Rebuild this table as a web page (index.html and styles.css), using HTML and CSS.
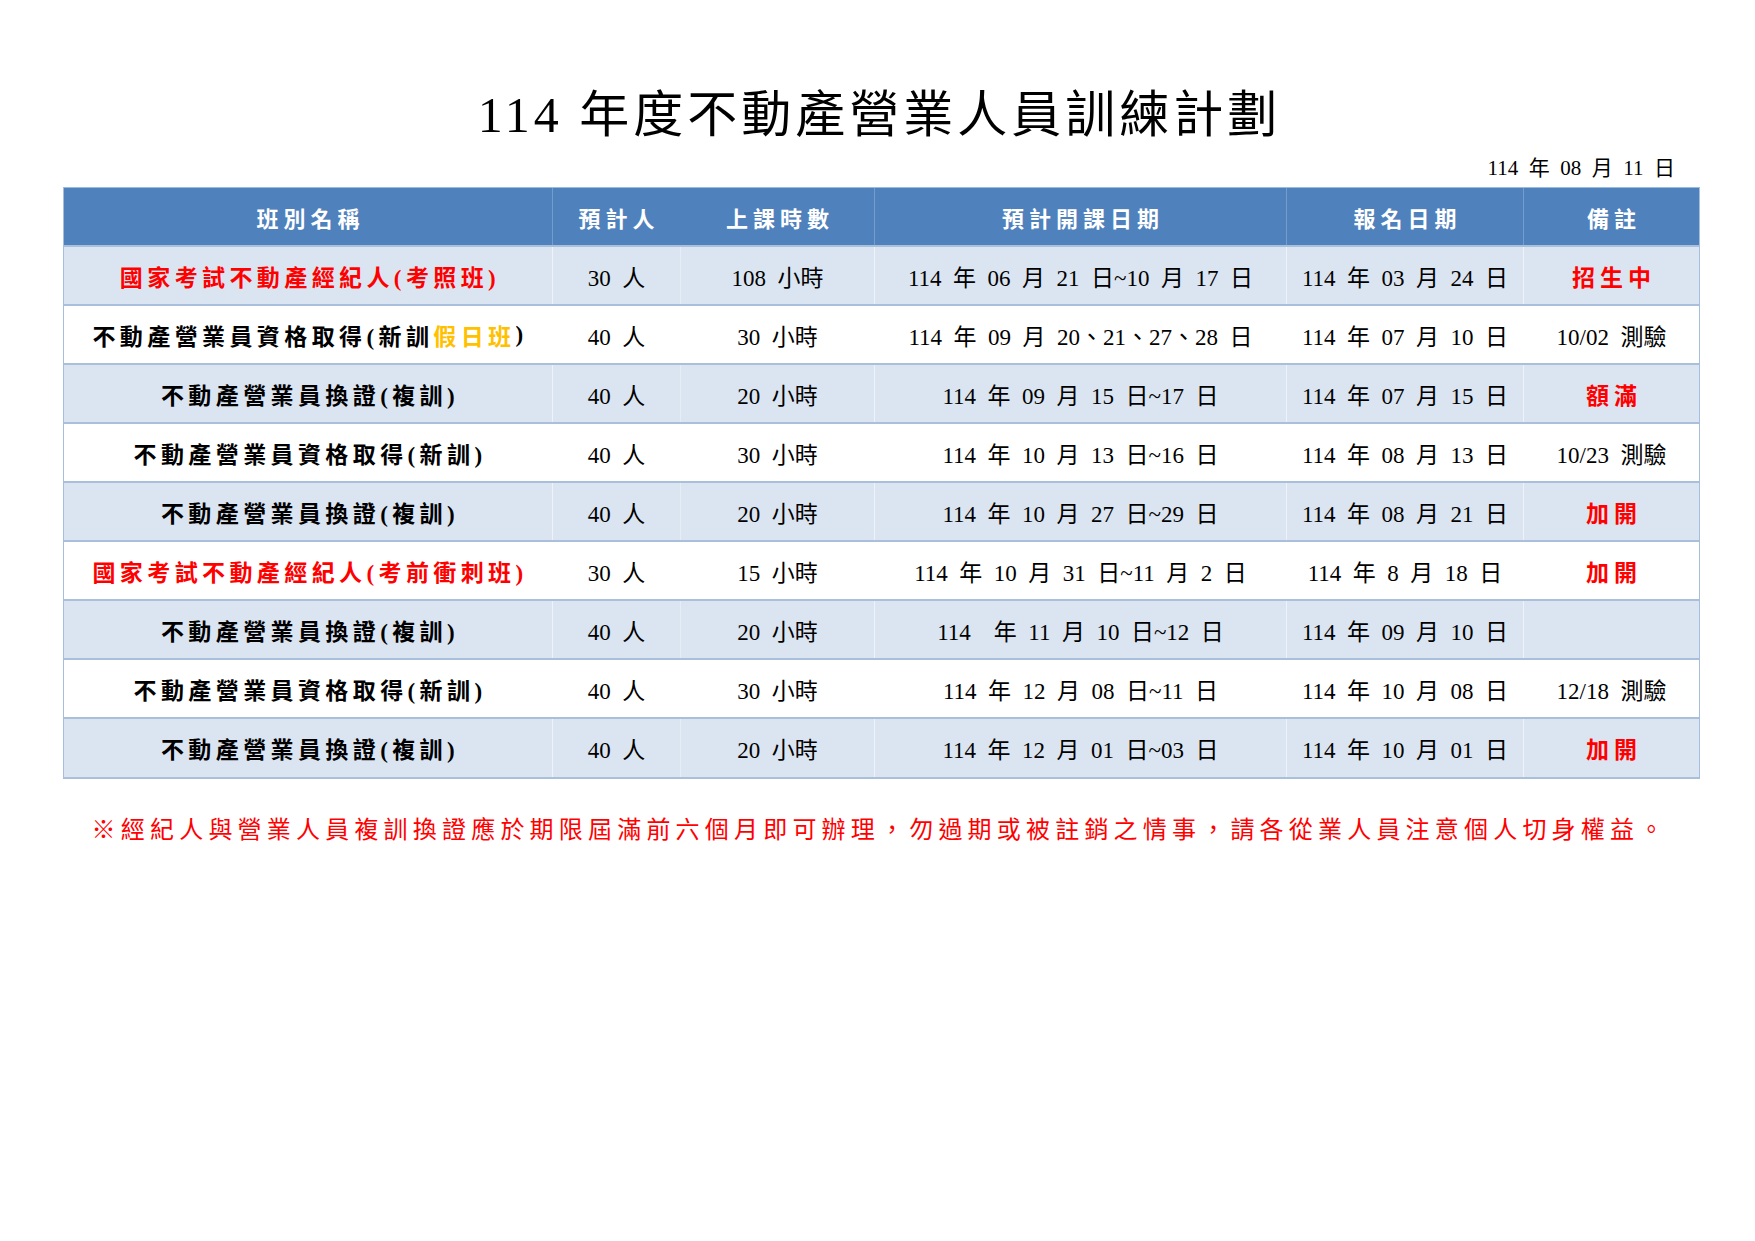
FILE: index.html
```html
<!DOCTYPE html>
<html lang="zh-Hant">
<head>
<meta charset="utf-8">
<title>114 年度不動產營業人員訓練計劃</title>
<link rel="stylesheet" href="styles.css">
</head>
<body>
<div class="page">
  <h1 class="title">114 年度不動產營業人員訓練計劃</h1>
  <div class="sheet">
    <div class="date">114 年 08 月 11 日</div>
    <div class="grid">
      <div class="row head">
        <div class="cell">班別名稱</div>
        <div class="cell">預計人</div>
        <div class="cell nosep">上課時數</div>
        <div class="cell">預計開課日期</div>
        <div class="cell">報名日期</div>
        <div class="cell">備註</div>
      </div>
      <div class="row alt">
        <div class="cell name red">國家考試不動產經紀人(考照班)</div>
        <div class="cell">30 人</div>
        <div class="cell nosep">108 小時</div>
        <div class="cell">114 年 06 月 21 日~10 月 17 日</div>
        <div class="cell">114 年 03 月 24 日</div>
        <div class="cell tag">招生中</div>
      </div>
      <div class="row">
        <div class="cell name">不動產營業員資格取得(新訓<span class="gold">假日班</span>)</div>
        <div class="cell">40 人</div>
        <div class="cell nosep">30 小時</div>
        <div class="cell">114 年 09 月 20、21、27、28 日</div>
        <div class="cell">114 年 07 月 10 日</div>
        <div class="cell">10/02 測驗</div>
      </div>
      <div class="row alt">
        <div class="cell name">不動產營業員換證(複訓)</div>
        <div class="cell">40 人</div>
        <div class="cell nosep">20 小時</div>
        <div class="cell">114 年 09 月 15 日~17 日</div>
        <div class="cell">114 年 07 月 15 日</div>
        <div class="cell tag">額滿</div>
      </div>
      <div class="row">
        <div class="cell name">不動產營業員資格取得(新訓)</div>
        <div class="cell">40 人</div>
        <div class="cell nosep">30 小時</div>
        <div class="cell">114 年 10 月 13 日~16 日</div>
        <div class="cell">114 年 08 月 13 日</div>
        <div class="cell">10/23 測驗</div>
      </div>
      <div class="row alt">
        <div class="cell name">不動產營業員換證(複訓)</div>
        <div class="cell">40 人</div>
        <div class="cell nosep">20 小時</div>
        <div class="cell">114 年 10 月 27 日~29 日</div>
        <div class="cell">114 年 08 月 21 日</div>
        <div class="cell tag">加開</div>
      </div>
      <div class="row">
        <div class="cell name red">國家考試不動產經紀人(考前衝刺班)</div>
        <div class="cell">30 人</div>
        <div class="cell nosep">15 小時</div>
        <div class="cell">114 年 10 月 31 日~11 月 2 日</div>
        <div class="cell">114 年 8 月 18 日</div>
        <div class="cell tag">加開</div>
      </div>
      <div class="row alt">
        <div class="cell name">不動產營業員換證(複訓)</div>
        <div class="cell">40 人</div>
        <div class="cell nosep">20 小時</div>
        <div class="cell">114 &nbsp;年 11 月 10 日~12 日</div>
        <div class="cell">114 年 09 月 10 日</div>
        <div class="cell"></div>
      </div>
      <div class="row">
        <div class="cell name">不動產營業員資格取得(新訓)</div>
        <div class="cell">40 人</div>
        <div class="cell nosep">30 小時</div>
        <div class="cell">114 年 12 月 08 日~11 日</div>
        <div class="cell">114 年 10 月 08 日</div>
        <div class="cell">12/18 測驗</div>
      </div>
      <div class="row alt last">
        <div class="cell name">不動產營業員換證(複訓)</div>
        <div class="cell">40 人</div>
        <div class="cell nosep">20 小時</div>
        <div class="cell">114 年 12 月 01 日~03 日</div>
        <div class="cell">114 年 10 月 01 日</div>
        <div class="cell tag">加開</div>
      </div>
    </div>
  </div>
  <p class="note">※經紀人與營業人員複訓換證應於期限屆滿前六個月即可辦理，勿過期或被註銷之情事，請各從業人員注意個人切身權益。</p>
</div>
</body>
</html>
```

FILE: styles.css
```css
html, body {
  margin: 0;
  padding: 0;
  background: #ffffff;
}

body {
  font-family: "Liberation Serif", "Noto Sans CJK TC", serif;
  color: #000000;
}

.page {
  width: 1755px;
}

.title {
  margin: 85px 0 0;
  height: 60px;
  line-height: 60px;
  padding-left: 4px;
  font-size: 50px;
  font-weight: 400;
  letter-spacing: 4px;
  text-align: center;
}

.sheet {
  margin: 10px 0 0 63px;
  width: 1637px;
}

.date {
  height: 26px;
  line-height: 26px;
  padding-right: 25px;
  text-align: right;
  font-size: 21px;
  word-spacing: 0.25em;
}

.grid {
  margin-top: 6px;
  border-left: 1px solid #a6bddb;
  border-right: 1px solid #a6bddb;
}

.row {
  display: grid;
  grid-template-columns: 488px 128px 194px 412px 237px 176px;
  box-sizing: border-box;
  height: 59px;
  border-bottom: 2px solid #a9bfdc;
  background: #ffffff;
  font-size: 23px;
  word-spacing: 0.25em;
}

.row.alt {
  background: #dbe5f1;
}

.row.last {
  height: 60px;
}

.row.head {
  height: 60px;
  background: #4f81bd;
  border-top: 1px solid #9cb9de;
  color: #ffffff;
  font-size: 22px;
  font-weight: 700;
  letter-spacing: 5px;
  word-spacing: 0;
}

.cell {
  display: flex;
  align-items: center;
  justify-content: center;
  white-space: nowrap;
  border-left: 1px solid rgba(255, 255, 255, 0.55);
}

.cell:first-child {
  border-left: none;
}

.head .cell {
  padding-left: 5px;
  border-left-color: rgba(255, 255, 255, 0.22);
}

.head .cell.nosep {
  border-left-color: transparent;
}

.cell.nosep {
  border-left-color: rgba(255, 255, 255, 0.3);
}

.name {
  font-weight: 700;
  letter-spacing: 4.4px;
  padding-left: 4px;
}

.red {
  color: #ff0000;
}

.gold {
  color: #ffc000;
}

.tag {
  font-weight: 700;
  letter-spacing: 5px;
  padding-left: 5px;
  color: #ff0000;
}

.note {
  margin: 36px 0 0;
  height: 30px;
  line-height: 30px;
  padding-left: 5px;
  text-align: center;
  font-size: 24px;
  letter-spacing: 5.2px;
  color: #ff0000;
}
```
